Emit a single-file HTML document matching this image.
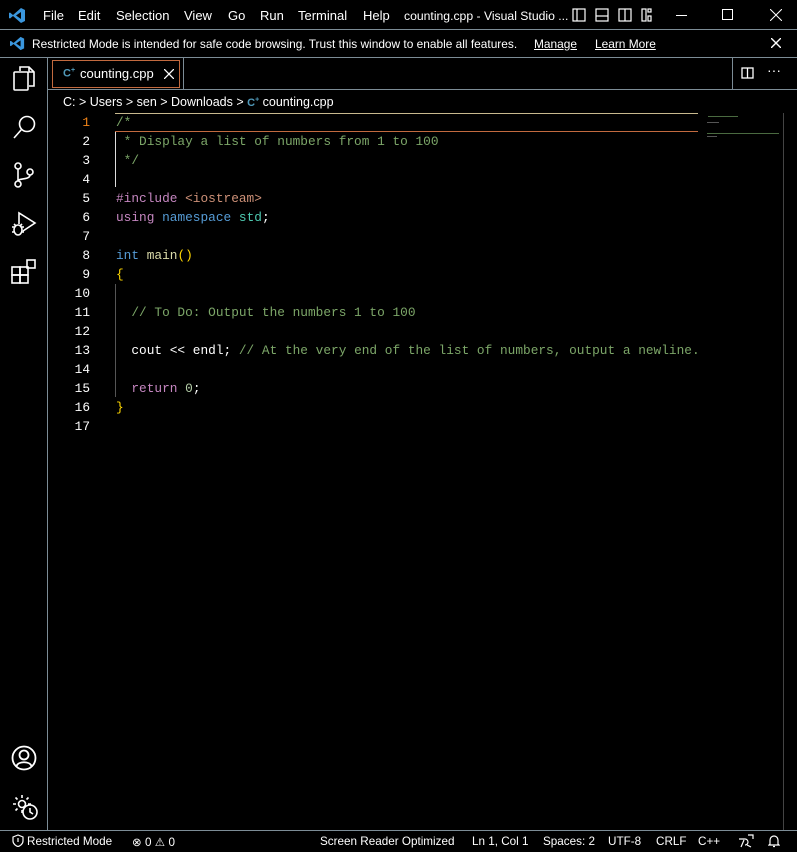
<!DOCTYPE html>
<html><head><meta charset="utf-8"><style>
*{margin:0;padding:0;box-sizing:border-box}
body{width:797px;height:852px;background:#000;color:#fff;font-family:"Liberation Sans",sans-serif;font-size:13px;position:relative;overflow:hidden}
.abs{position:absolute}
.menu span{position:absolute;top:8px;font-size:13px}
.code{position:absolute;left:116px;top:113px;font-family:"Liberation Mono",monospace;font-size:12.8px;line-height:19px;white-space:pre}
.gut{position:absolute;left:60px;width:30px;top:113px;font-family:"Liberation Mono",monospace;font-size:12.8px;line-height:19px;text-align:right;white-space:pre}
.c{color:#7ca668}.k{color:#c586c0}.s{color:#ce9178}.n{color:#569cd6}.t{color:#4ec9b0}.f{color:#dcdcaa}.y{color:#ffd700}.num{color:#b5cea8}
.st span{position:absolute;top:835px;font-size:11.7px}
svg{position:absolute}
</style></head><body>
<svg style="left:9px;top:7px" width="17" height="17" viewBox="0 0 17 17"><path d="M12 1 L16 3 V14 L12 16 L4 9 L1 11.5 L0 11 V6 L1 5.5 L4 8 Z M12 5 L7 8.5 L12 12 Z" fill="#3a96dd"/></svg>
<div class="menu">
<span style="left:43px">File</span><span style="left:78px">Edit</span><span style="left:116px">Selection</span><span style="left:184px">View</span><span style="left:228px">Go</span><span style="left:260px">Run</span><span style="left:298px">Terminal</span><span style="left:363px">Help</span><span style="left:404px;font-size:12.2px;top:9px">counting.cpp - Visual Studio ...</span>
</div>
<svg style="left:572px;top:8px" width="80" height="14" viewBox="0 0 80 14" fill="none" stroke="#fff" stroke-width="1.2"><rect x="1" y="1" width="12" height="12"/><line x1="5" y1="1" x2="5" y2="13"/><rect x="24" y="1" width="12" height="12"/><line x1="24" y1="8" x2="36" y2="8"/><rect x="47" y="1" width="12" height="12"/><line x1="53" y1="1" x2="53" y2="13"/><rect x="70" y="1" width="4" height="12"/><rect x="76" y="1" width="3" height="3"/><rect x="76" y="8" width="3" height="5"/></svg>
<div class="abs" style="left:676px;top:15px;width:11px;height:1px;background:#fff"></div>
<div class="abs" style="left:722px;top:9px;width:11px;height:11px;border:1px solid #fff"></div>
<svg style="left:770px;top:9px" width="12" height="12"><path d="M0 0L12 12M12 0L0 12" stroke="#fff"/></svg>
<div class="abs" style="left:0;top:29px;width:797px;height:1px;background:#7c8c96"></div>
<svg style="left:10px;top:36px" width="15" height="15" viewBox="0 0 17 17"><path d="M12 1 L16 3 V14 L12 16 L4 9 L1 11.5 L0 11 V6 L1 5.5 L4 8 Z M12 5 L7 8.5 L12 12 Z" fill="#3a96dd"/></svg>
<span class="abs" style="left:32px;top:37px;font-size:11.9px">Restricted Mode is intended for safe code browsing. Trust this window to enable all features.</span>
<span class="abs" style="left:534px;top:37px;font-size:11.9px;text-decoration:underline">Manage</span>
<span class="abs" style="left:595px;top:37px;font-size:11.9px;text-decoration:underline">Learn More</span>
<svg style="left:771px;top:38px" width="10" height="10"><path d="M0 0L10 10M10 0L0 10" stroke="#fff" stroke-width="1.4"/></svg>
<div class="abs" style="left:0;top:57px;width:797px;height:1px;background:#7c8c96"></div>
<div class="abs" style="left:47px;top:58px;width:1px;height:772px;background:#7c8c96"></div>
<svg style="left:12px;top:66px" width="24" height="26" viewBox="0 0 24 26" fill="none" stroke="#fff" stroke-width="1.6"><path d="M8 5V1h9l5 5v14h-5"/><path d="M17 1v5h5"/><rect x="2" y="6" width="14" height="18" rx="1"/></svg>
<svg style="left:13px;top:114px" width="24" height="26" fill="none" stroke="#fff" stroke-width="1.6"><circle cx="14" cy="10" r="7.5"/><path d="M8.5 15.5L1 24"/></svg>
<svg style="left:13px;top:162px" width="22" height="26" fill="none" stroke="#fff" stroke-width="1.6"><circle cx="5" cy="4" r="3"/><circle cx="5" cy="22" r="3"/><circle cx="17" cy="10" r="3"/><path d="M5 7v12M17 13c0 5-12 3-12 6"/></svg>
<svg style="left:10px;top:210px" width="28" height="28" fill="none" stroke="#fff" stroke-width="1.6"><path d="M9 14V3l16 10-12 8"/><ellipse cx="8" cy="20" rx="4" ry="5"/><path d="M2 17h3M11 17h3M2 22h3M11 22h3M4 14l2 2M12 14l-2 2"/></svg>
<svg style="left:11px;top:259px" width="26" height="26" fill="none" stroke="#fff" stroke-width="1.6"><rect x="1" y="8" width="8" height="8"/><rect x="9" y="8" width="8" height="8"/><rect x="1" y="16" width="8" height="8"/><rect x="9" y="16" width="8" height="8"/><rect x="16" y="1" width="8" height="8"/></svg>
<svg style="left:11px;top:745px" width="26" height="26" fill="none" stroke="#fff" stroke-width="1.8"><circle cx="13" cy="13" r="11.5"/><circle cx="13" cy="10" r="4.5"/><path d="M5.5 21c2-5 13-5 15 0"/></svg>
<svg style="left:11px;top:793px" width="28" height="28" fill="none" stroke="#fff" stroke-width="1.6"><circle cx="11" cy="11" r="3.5"/><path d="M11 2v3M11 17v3M2 11h3M17 11h3M4.5 4.5l2 2M15.5 15.5l2 2M4.5 17.5l2-2M17.5 4.5l-2 2"/><circle cx="19" cy="19" r="7" fill="#000"/><path d="M19 15v4l3 2"/></svg>
<div class="abs" style="left:52px;top:60px;width:128px;height:28px;border:1px solid #c26a3f"></div>
<span class="abs" style="left:63px;top:67px;color:#519aba;font-size:11px;font-weight:bold">C<sup style="font-size:7px">+</sup></span>
<span class="abs" style="left:80px;top:66px;font-size:13px">counting.cpp</span>
<svg style="left:164px;top:69px" width="10" height="10"><path d="M0 0L10 10M10 0L0 10" stroke="#fff" stroke-width="1.3"/></svg>
<div class="abs" style="left:183px;top:58px;width:1px;height:31px;background:#7c8c96"></div>
<div class="abs" style="left:732px;top:58px;width:1px;height:31px;background:#7c8c96"></div>
<svg style="left:741px;top:67px" width="13" height="12" fill="none" stroke="#fff" stroke-width="1.3"><rect x="1" y="1" width="11" height="10"/><line x1="6.5" y1="1" x2="6.5" y2="11"/></svg>
<span class="abs" style="left:767px;top:62px;font-size:14px">···</span>
<div class="abs" style="left:48px;top:89px;width:749px;height:1px;background:#7c8c96"></div>
<span class="abs" style="left:63px;top:95px;font-size:12.5px">C: &gt; Users &gt; sen &gt; Downloads &gt; <span style="color:#519aba;font-weight:bold;font-size:11px">C<sup style="font-size:7px">+</sup></span> counting.cpp</span>
<div class="abs" style="left:115px;top:113px;width:583px;height:19px;border-top:1px solid #c8b98e;border-bottom:1px solid #c26a3f"></div>
<div class="abs" style="left:115px;top:132px;width:1px;height:55px;background:#ddd"></div>
<div class="abs" style="left:115px;top:284px;width:1px;height:113px;background:#555"></div>
<div class="abs" style="left:783px;top:113px;width:1px;height:717px;background:#444"></div>
<div class="gut"><span style="color:#f38518">1</span>
2
3
4
5
6
7
8
9
10
11
12
13
14
15
16
17</div>
<div class="code"><span class="c">/*</span>
<span class="c"> * Display a list of numbers from 1 to 100</span>
<span class="c"> */</span>

<span class="k">#include</span> <span class="s">&lt;iostream&gt;</span>
<span class="k">using</span> <span class="n">namespace</span> <span class="t">std</span>;

<span class="n">int</span> <span class="f">main</span><span class="y">()</span>
<span class="y">{</span>

  <span class="c">// To Do: Output the numbers 1 to 100</span>

  cout &lt;&lt; endl; <span class="c">// At the very end of the list of numbers, output a newline.</span>

  <span class="k">return</span> <span class="num">0</span>;
<span class="y">}</span>
</div>
<div class="abs" style="left:708px;top:116px;width:30px;height:1px;background:#4a6a40"></div>
<div class="abs" style="left:707px;top:122px;width:12px;height:1px;background:#555"></div>
<div class="abs" style="left:707px;top:133px;width:72px;height:1px;background:#4a6a40"></div>
<div class="abs" style="left:707px;top:136px;width:10px;height:1px;background:#555"></div>
<div class="abs" style="left:0;top:830px;width:797px;height:1px;background:#7c8c96"></div>
<svg style="left:12px;top:834px" width="12" height="13" fill="none" stroke="#fff" stroke-width="1.2"><path d="M6 1L1 3v4c0 3 3 5 5 5.5 2-.5 5-2.5 5-5.5V3z"/><path d="M6 4v4"/></svg>
<div class="st"><span style="left:27px">Restricted Mode</span><span style="left:132px">⊗ 0 ⚠ 0</span><span style="left:320px">Screen Reader Optimized</span><span style="left:472px">Ln 1, Col 1</span><span style="left:543px">Spaces: 2</span><span style="left:608px">UTF-8</span><span style="left:656px">CRLF</span><span style="left:698px">C++</span></div>
<svg style="left:738px;top:834px" width="16" height="14" fill="none" stroke="#fff" stroke-width="1.2"><path d="M3 13L6 6M1 5h6a3 3 0 010 6M9 11l4 2M10 1h5v4"/></svg>
<svg style="left:768px;top:834px" width="12" height="14" fill="none" stroke="#fff" stroke-width="1.2"><path d="M2 10V6a4 4 0 018 0v4l1 1H1zM5 12.5h2"/></svg>
</body></html>
